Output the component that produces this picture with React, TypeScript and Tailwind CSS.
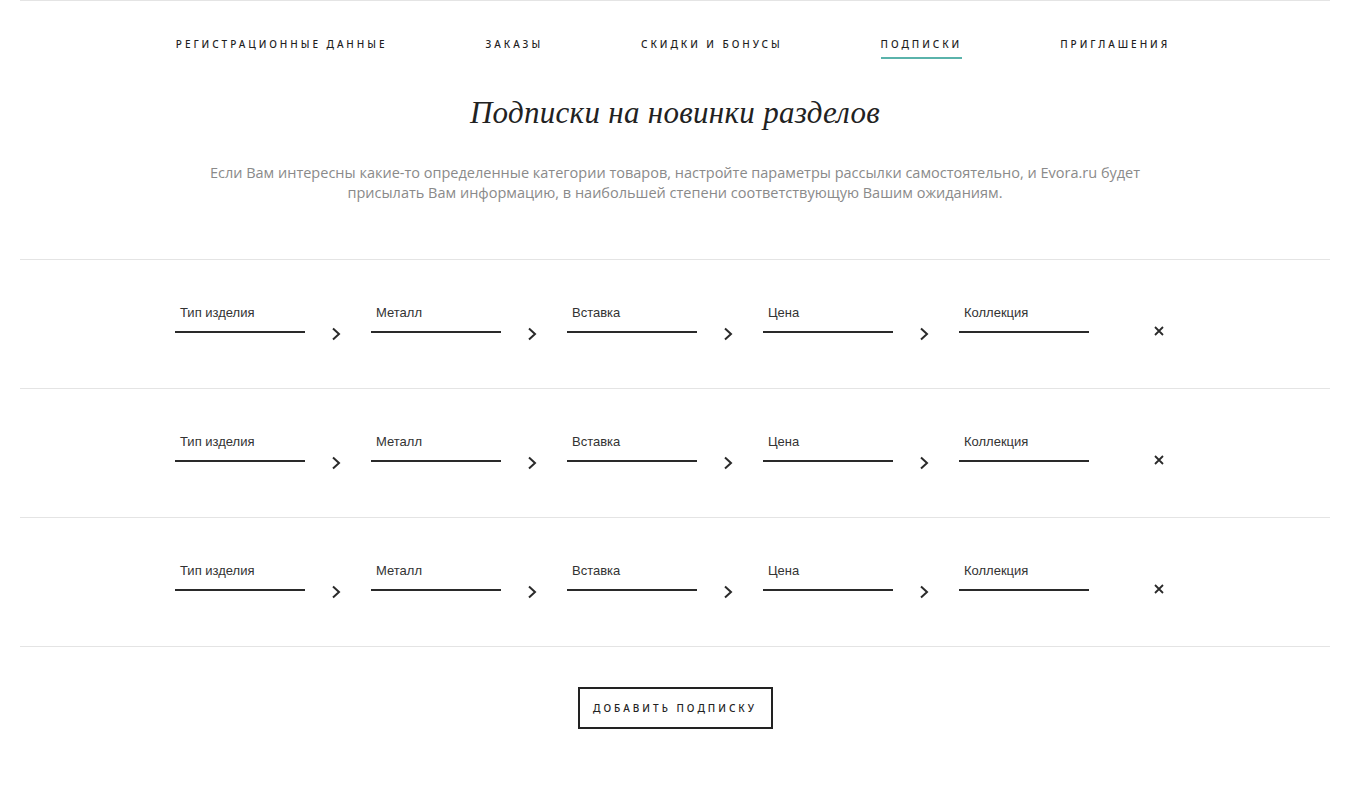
import React from 'react'

const tabs = ['Регистрационные данные', 'Заказы', 'Скидки и бонусы', 'Подписки', 'Приглашения']
const fields = ['Тип изделия', 'Металл', 'Вставка', 'Цена', 'Коллекция']

function Chevron() {
  return (
    <svg width="10" height="14" viewBox="0 0 10 14" fill="none">
      <path d="M2 1.5L8 7L2 12.5" stroke="#2a2a2a" strokeWidth="2" />
    </svg>
  )
}

function Cross() {
  return (
    <svg width="10" height="10" viewBox="0 0 10 10" fill="none">
      <path d="M1 1L9 9M9 1L1 9" stroke="#2a2a2a" strokeWidth="1.8" />
    </svg>
  )
}

function SubscriptionRow() {
  return (
    <div className="border-t border-[#e4e4e4] pt-[45px] pb-[55px]">
      <div className="mx-auto flex w-[1000px] items-end">
        {fields.map((field, i) => (
          <React.Fragment key={field}>
            <div className="w-[130px] border-b-2 border-[#2a2a2a] pb-[10px] pl-[5px] text-[13px] leading-[16px] text-[#333] [font-family:'Liberation_Sans',Arial,sans-serif]">
              {field}
            </div>
            {i < fields.length - 1 && (
              <div className="mb-[-8px] flex w-[66px] justify-center pr-[4px]">
                <Chevron />
              </div>
            )}
          </React.Fragment>
        ))}
        <div className="ml-auto mb-[-3px] mr-[11px]">
          <Cross />
        </div>
      </div>
    </div>
  )
}

export default function App() {
  return (
    <div className="min-h-screen bg-white">
      <div className="ml-5 mr-[17px] border-t border-[#e4e4e4]">
        {/* Tabs */}
        <nav className="flex justify-center gap-[98px] pt-[35px] pr-[4px] [font-family:'Noto_Sans',sans-serif]">
          {tabs.map((tab) => (
            <a
              key={tab}
              href="#"
              className={`border-b-2 pb-[5px] text-[10px] leading-[16px] font-medium tracking-[0.295em] text-[#1f1f1f] uppercase ${
                tab === 'Подписки' ? 'border-[#5ab3ab]' : 'border-transparent'
              }`}
            >
              {tab}
            </a>
          ))}
        </nav>

        <h1 className="mt-[36px] text-center text-[31px] leading-[36px] tracking-[0.3px] text-[#222] italic [font-family:'Liberation_Serif','Times_New_Roman',serif]">
          Подписки на новинки разделов
        </h1>

        <p className="mt-[32px] text-center text-[14.5px] leading-[20px] text-[#8a8a8a] [font-family:'Open_Sans',sans-serif]">
          Если Вам интересны какие-то определенные категории товаров, настройте параметры рассылки самостоятельно, и Evora.ru будет
          <br />
          присылать Вам информацию, в наибольшей степени соответствующую Вашим ожиданиям.
        </p>

        {/* Subscriptions */}
        <div className="mt-[56px] border-b border-[#e4e4e4]">
          <SubscriptionRow />
          <SubscriptionRow />
          <SubscriptionRow />
        </div>

        <div className="flex justify-center pt-[40px] pb-[70px]">
          <button
            type="button"
            className="h-[42px] w-[195px] border-2 border-[#222] text-[10px] font-medium tracking-[0.3em] text-[#222] uppercase [font-family:'Noto_Sans',sans-serif]"
          >
            Добавить подписку
          </button>
        </div>
      </div>
    </div>
  )
}
